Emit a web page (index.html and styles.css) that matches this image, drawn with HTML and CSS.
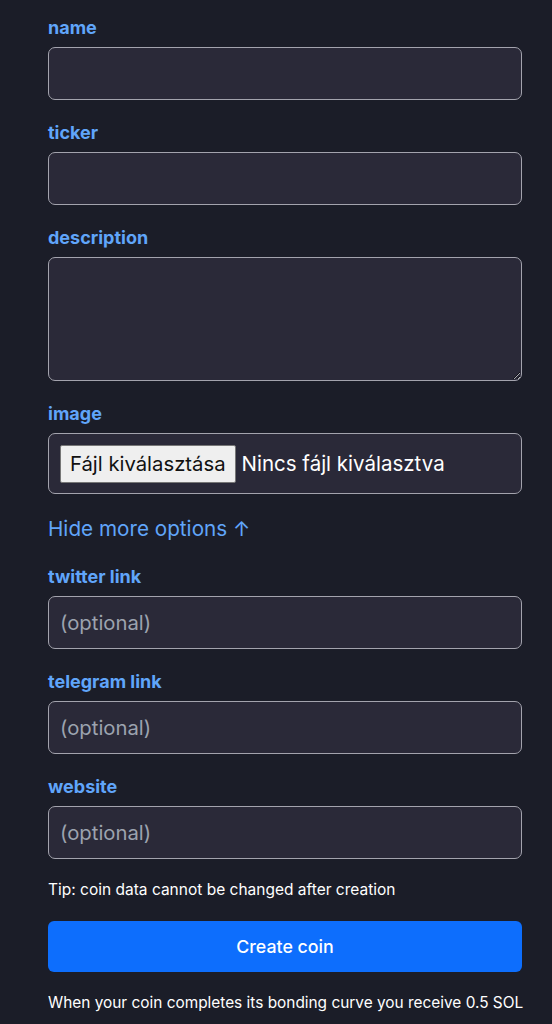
FILE: index.html
```html
<!DOCTYPE html>
<html lang="en">
<head>
<meta charset="utf-8">
<title>Create coin</title>
<link rel="stylesheet" href="styles.css">
</head>
<body>
<form class="form">
  <div class="field">
    <label class="label" for="name">name</label>
    <input class="input" id="name" type="text">
  </div>
  <div class="field">
    <label class="label" for="ticker">ticker</label>
    <input class="input" id="ticker" type="text">
  </div>
  <div class="field">
    <label class="label" for="desc">description</label>
    <textarea class="input textarea" id="desc"></textarea>
  </div>
  <div class="field">
    <label class="label" for="img">image</label>
    <div class="input filebox">
      <span class="filebtn">Fájl kiválasztása</span>
      <span class="filename">Nincs fájl kiválasztva</span>
    </div>
  </div>
  <div class="toggle">Hide more options ↑</div>
  <div class="field">
    <label class="label" for="tw">twitter link</label>
    <input class="input" id="tw" type="text" placeholder="(optional)">
  </div>
  <div class="field">
    <label class="label" for="tg">telegram link</label>
    <input class="input" id="tg" type="text" placeholder="(optional)">
  </div>
  <div class="field">
    <label class="label" for="web">website</label>
    <input class="input" id="web" type="text" placeholder="(optional)">
  </div>
  <p class="tip">Tip: coin data cannot be changed after creation</p>
  <button class="submit" type="button">Create coin</button>
  <p class="note">When your coin completes its bonding curve you receive 0.5 SOL</p>
</form>
</body>
</html>
```
FILE: styles.css
```css
html, body {
  margin: 0;
  padding: 0;
  background: #1b1d28;
  font-family: Inter, "Noto Sans", sans-serif;
  color: #ffffff;
}
.form {
  padding: 16px 30px 0 48px;
  display: flex;
  flex-direction: column;
}
.field {
  display: flex;
  flex-direction: column;
  margin-bottom: 21px;
}
.label {
  color: #60a5fa;
  font-weight: 700;
  font-size: 18px;
  line-height: 24px;
  margin-bottom: 7px;
}
.input {
  box-sizing: border-box;
  height: 53px;
  width: 100%;
  background: #2a2938;
  border: 1px solid #a3a3ad;
  border-radius: 7px;
  color: #fff;
  font-family: Inter, sans-serif;
  font-size: 20.3px;
  padding: 0 11px;
  outline: none;
}
.input::placeholder {
  color: #9ca3af;
}
.textarea {
  height: 124px;
  resize: vertical;
  padding: 8px 11px;
}
.filebox {
  height: 61px;
  display: flex;
  align-items: center;
  gap: 6px;
}
.filebtn {
  background: #efefef;
  color: #111;
  border: 1px solid #767676;
  border-radius: 2px;
  font-size: 20.3px;
  height: 38px;
  box-sizing: border-box;
  display: flex;
  align-items: center;
  padding: 0 9px;
}
.filename {
  font-size: 20.5px;
  color: #fff;
}
.toggle {
  color: #60a5fa;
  font-size: 20.7px;
  line-height: 28px;
  margin: 0 0 22px;
}
.tip {
  margin: -2px 0 19px;
  font-size: 15.5px;
  line-height: 24px;
  color: #fff;
}
.submit {
  height: 51px;
  background: #0d6efd;
  color: #fff;
  border: none;
  border-radius: 6px;
  font-family: Inter, sans-serif;
  font-size: 17.8px;
  font-weight: 500;
}
.note {
  margin: 19px 0 0;
  font-size: 15.4px;
  line-height: 24px;
  color: #fff;
  white-space: nowrap;
}
```
